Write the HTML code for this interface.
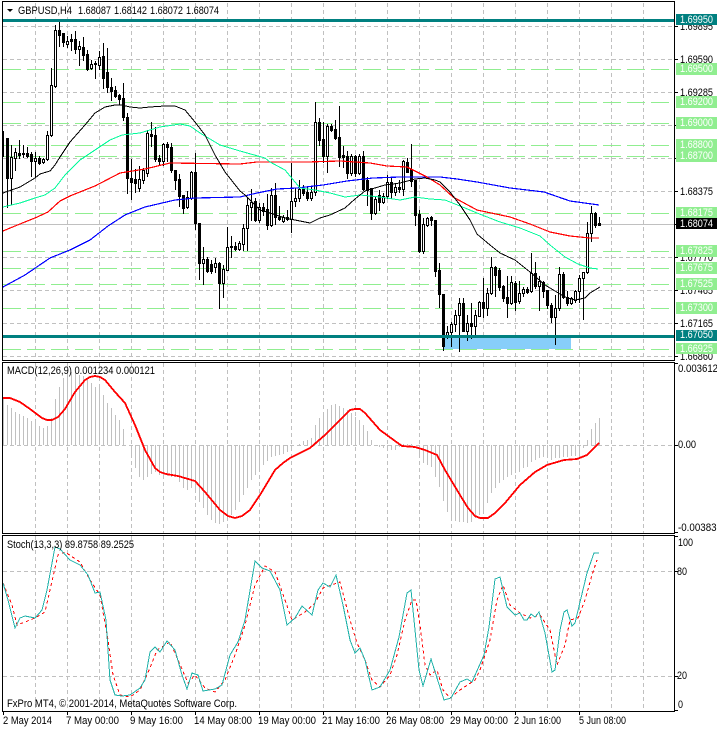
<!DOCTYPE html>
<html><head><meta charset="utf-8"><title>GBPUSD,H4</title>
<style>
html,body{margin:0;padding:0;background:#fff;width:717px;height:729px;overflow:hidden}
svg{display:block}
text{font-family:"Liberation Sans",sans-serif;font-size:10.7px;fill:#000}
.l{fill:none;shape-rendering:crispEdges}
.w{fill:#fff}
</style></head><body>
<svg width="717" height="729" viewBox="0 0 717 729" xmlns="http://www.w3.org/2000/svg">
<rect width="717" height="729" fill="#fff"/>
<!-- grid -->
<g class="l" stroke="#c0c0c0" stroke-width="1" stroke-dasharray="4 3">
<path d="M35.5 3V360M67.5 3V360M99.5 3V360M131.5 3V360M163.5 3V360M195.5 3V360M227.5 3V360M259.5 3V360M291.5 3V360M323.5 3V360M355.5 3V360M387.5 3V360M419.5 3V360M451.5 3V360M483.5 3V360M515.5 3V360M547.5 3V360M579.5 3V360M611.5 3V360M643.5 3V360"/>
<path d="M35.5 363V533M67.5 363V533M99.5 363V533M131.5 363V533M163.5 363V533M195.5 363V533M227.5 363V533M259.5 363V533M291.5 363V533M323.5 363V533M355.5 363V533M387.5 363V533M419.5 363V533M451.5 363V533M483.5 363V533M515.5 363V533M547.5 363V533M579.5 363V533M611.5 363V533M643.5 363V533"/>
<path d="M35.5 536V711M67.5 536V711M99.5 536V711M131.5 536V711M163.5 536V711M195.5 536V711M227.5 536V711M259.5 536V711M291.5 536V711M323.5 536V711M355.5 536V711M387.5 536V711M419.5 536V711M451.5 536V711M483.5 536V711M515.5 536V711M547.5 536V711M579.5 536V711M611.5 536V711M643.5 536V711"/>
<path d="M3 26.5H674M3 59.5H674M3 92.5H674M3 125.5H674M3 158.5H674M3 191.5H674M3 257.5H674M3 290.5H674M3 323.5H674M3 356.5H674M3 445.5H674M3 571.5H674M3 676.5H674"/>
</g>
<path class="l" stroke="#c0c0c0" d="M3 224.5H674"/>
<!-- levels -->
<path class="l" stroke="#90ee90" stroke-dasharray="18 6" d="M3 69.5H670M3 102.5H670M3 123.5H670M3 145.5H670M3 156.5H670M3 213.5H670M3 251.5H670M3 268.5H670M3 284.5H670M3 308.5H670M3 349.5H670"/>
<rect x="443" y="336" width="128" height="13" fill="#87cefa"/>
<!-- candles wicks -->
<path class="l" stroke="#000" d="M3.5 131V157M7.5 138V208M11.5 145V205M15.5 148V171M19.5 140V159M23.5 145V158M27.5 147V158M31.5 152V177M35.5 152V177M39.5 156V165M43.5 158V164M47.5 131V161M51.5 68V137M55.5 25V88M59.5 20V47M63.5 33V47M67.5 36V48M71.5 34V51M75.5 31V54M79.5 41V66M83.5 37V61M87.5 50V71M91.5 60V70M95.5 61V79M99.5 51V70M103.5 43V89M107.5 48V93M111.5 78V101M115.5 86V98M119.5 94V105M123.5 83V121M127.5 113V194M131.5 159V200M135.5 169V193M139.5 166V192M143.5 168V184M147.5 130V177M151.5 122V147M155.5 127V162M159.5 155V166M163.5 143V166M167.5 142V162M171.5 143V173M175.5 170V190M179.5 174V207M183.5 195V214M187.5 191V209M191.5 171V200M195.5 153V230M199.5 223V280M203.5 247V285M207.5 257V273M211.5 260V274M215.5 258V273M219.5 262V309M223.5 265V298M227.5 227V271M231.5 236V258M235.5 242V251M239.5 241V251M243.5 224V251M247.5 197V251M251.5 189V221M255.5 198V222M259.5 203V223M263.5 203V216M267.5 194V230M271.5 188V227M275.5 183V225M279.5 206V221M283.5 215V223M287.5 210V221M291.5 163V233M295.5 188V207M299.5 180V202M303.5 185V196M307.5 187V201M311.5 187V201M315.5 102V196M319.5 118V146M323.5 122V163M327.5 124V173M331.5 124V132M335.5 120V140M339.5 106V167M343.5 146V168M347.5 151V179M351.5 154V176M355.5 155V177M359.5 154V175M363.5 151V191M367.5 177V206M371.5 188V220M375.5 196V215M379.5 190V211M383.5 193V204M387.5 175V199M391.5 178V199M395.5 183V196M399.5 180V193M403.5 160V196M407.5 158V173M411.5 144V187M415.5 180V226M419.5 210V253M423.5 218V254M427.5 217V227M431.5 216V226M435.5 220V277M439.5 263V308M443.5 294V351M447.5 326V339M451.5 322V347M455.5 310V332M459.5 298V352M463.5 298V332M467.5 315V341M471.5 303V339M475.5 310V336M479.5 301V317M483.5 278V318M487.5 288V316M491.5 257V295M495.5 266V297M499.5 268V291M503.5 285V302M507.5 276V318M511.5 276V305M515.5 281V311M519.5 281V304M523.5 287V297M527.5 287V294M531.5 253V293M535.5 262V289M539.5 276V311M543.5 281V298M547.5 290V309M551.5 303V323M555.5 295V345M559.5 267V311M563.5 272V299M567.5 291V306M571.5 297V305M575.5 290V303M579.5 275V303M583.5 272V320M587.5 222V274M591.5 206V242M595.5 212V228M599.5 217V226"/>
<!-- candle bodies -->
<path class="l" stroke="#000" stroke-width="3" d="M7.5 138V179M11.5 157V179M15.5 152V159M19.5 153V156M23.5 153V155M27.5 153V157M31.5 154V162M35.5 158V162M39.5 158V164M43.5 159V163M47.5 135V160M51.5 85V136M55.5 30V87M59.5 30V36M63.5 33V43M67.5 41V45M71.5 39V42M75.5 39V50M79.5 46V50M83.5 47V56M87.5 54V70M91.5 64V69M95.5 63V65M99.5 57V66M103.5 56V79M107.5 72V88M111.5 87V92M115.5 90V97M119.5 95V100M123.5 98V118M127.5 117V179M131.5 178V183M135.5 179V184M139.5 179V189M143.5 170V181M147.5 133V174M151.5 134V137M155.5 135V160M159.5 158V162M163.5 144V162M167.5 144V148M171.5 147V171M175.5 170V181M179.5 179V197M183.5 195V209M187.5 197V208M191.5 172V199M195.5 172V224M199.5 223V264M203.5 259V264M207.5 259V272M211.5 264V272M215.5 263V268M219.5 263V284M223.5 269V284M227.5 247V271M231.5 246V248M235.5 246V250M239.5 243V250M243.5 228V245M247.5 205V229M251.5 202V208M255.5 201V221M259.5 207V221M263.5 207V212M267.5 209V226M271.5 195V226M275.5 195V218M279.5 217V220M283.5 217V222M287.5 217V220M291.5 201V220M295.5 198V202M299.5 189V199M303.5 189V194M307.5 192V199M311.5 192V199M315.5 122V193M319.5 122V141M323.5 139V157M327.5 126V157M331.5 126V131M335.5 129V139M339.5 137V158M343.5 155V158M347.5 156V174M351.5 156V174M355.5 156V174M359.5 156V174M363.5 156V190M367.5 180V191M371.5 188V214M375.5 199V214M379.5 195V203M383.5 196V203M387.5 182V197M391.5 182V193M395.5 187V193M399.5 187V190M403.5 161V190M407.5 162V173M411.5 169V182M415.5 180V216M419.5 214V252M423.5 224V252M427.5 218V226M431.5 217V221M435.5 220V272M439.5 270V295M443.5 294V347M447.5 332V336M451.5 324V333M455.5 315V325M459.5 303V316M463.5 303V332M467.5 323V332M471.5 323V327M475.5 315V327M479.5 302V317M483.5 302V309M487.5 293V309M491.5 267V294M495.5 267V276M499.5 270V288M503.5 286V299M507.5 297V304M511.5 282V304M515.5 283V303M519.5 293V302M523.5 289V294M527.5 289V293M531.5 273V292M535.5 273V287M539.5 281V287M543.5 282V292M547.5 290V306M551.5 305V318M555.5 308V318M559.5 274V309M563.5 274V298M567.5 297V304M571.5 298V304M575.5 291V301M579.5 278V292M583.5 272V279M587.5 233V273M591.5 213V234M595.5 213V226M599.5 223V226"/>
<!-- white insides -->
<path class="l" stroke="#fff" d="M11.5 158V178M15.5 153V158M35.5 159V161M43.5 160V162M47.5 136V159M51.5 86V135M55.5 31V86M67.5 42V44M79.5 47V49M91.5 65V68M99.5 58V65M139.5 180V188M143.5 171V180M147.5 134V173M163.5 145V161M187.5 198V207M191.5 173V198M203.5 260V263M215.5 264V267M223.5 270V283M227.5 248V270M239.5 244V249M243.5 229V244M247.5 206V228M251.5 203V207M259.5 208V220M271.5 196V225M283.5 218V221M287.5 218V219M291.5 202V219M295.5 199V201M299.5 190V198M311.5 193V198M315.5 123V192M327.5 127V156M351.5 157V173M359.5 157V173M375.5 200V213M383.5 197V202M387.5 183V196M395.5 188V192M403.5 162V189M423.5 225V251M427.5 219V225M447.5 333V335M451.5 325V332M455.5 316V324M459.5 304V315M467.5 324V331M475.5 316V326M479.5 303V316M487.5 294V308M491.5 268V293M511.5 283V303M519.5 294V301M523.5 290V293M531.5 274V291M539.5 282V286M555.5 309V317M559.5 275V308M571.5 299V303M575.5 292V300M579.5 279V291M583.5 273V278M587.5 234V272M591.5 214V233"/>
<!-- teal lines -->
<rect x="3" y="19" width="671" height="3" fill="#008080"/>
<rect x="3" y="335" width="671" height="3" fill="#008080"/>
<!-- MAs -->
<polyline class="l" stroke="#0000ff" stroke-width="1.2" points="3,287 25,275 50,258 70,250 90,240 108,226 125,215 145,207 175,200 195,198 240,197 257,193 277,189 297,188 323,185 347,181 373,178 400,177 440,177 457,179 477,182 510,188 544,192 570,201 599,205"/>
<polyline class="l" stroke="#ff0000" stroke-width="1.2" points="3,231 15,226 35,218 48,212 60,201 70,196 95,186 120,173 145,169 170,163 240,164 257,162 307,162 340,161 370,163 387,166 407,167 427,177 440,185 453,197 477,210 510,217 530,224 550,232 570,236 590,238 599,238"/>
<polyline class="l" stroke="#00fa9a" stroke-width="1" points="3,207 20,203 35,198 45,195 55,188 65,175 80,160 95,150 110,140 122,135 140,133 160,127 180,124 190,126 200,133 220,145 240,151 265,158 270,162 285,170 300,188 315,190 330,193 345,197 360,195 380,197 400,200 415,197 430,199 445,200 450,202 465,208 477,213 500,222 520,228 540,236 550,245 565,257 578,264 590,268 598,269"/>
<polyline class="l" stroke="#000" points="3,193 20,187 35,178 40,174 50,171 55,165 60,157 70,142 85,125 95,113 105,107 115,105 122,105 130,107 140,108 150,107 165,106 175,106 185,110 195,122 205,135 215,155 225,172 240,191 245,195 260,210 270,213 285,218 300,221 310,223 320,218 330,215 345,208 355,199 365,191 375,188 385,185 400,183 415,179 425,178 435,180 440,182 450,192 460,205 470,220 477,234 490,245 500,253 515,260 530,272 545,285 555,291 565,297 575,300 585,298 590,293 600,287"/>
<!-- MACD hist -->
<path class="l" stroke="#c0c0c0" d="M3.5 397V445M7.5 405V445M11.5 408V445M15.5 412V445M19.5 414V445M23.5 416V445M27.5 418V445M31.5 421V445M35.5 423V445M39.5 426V445M43.5 428V445M47.5 426V445M51.5 418V445M55.5 399V445M59.5 387V445M63.5 378V445M67.5 373V445M71.5 372V445M75.5 373V445M79.5 375V445M83.5 376V445M87.5 378V445M91.5 383V445M95.5 387V445M99.5 387V445M103.5 395V445M107.5 403V445M111.5 408V445M115.5 415V445M119.5 420V445M123.5 429V445M131.5 445V458M135.5 445V468M139.5 445V477M143.5 445V480M147.5 445V477M151.5 445V474M155.5 445V472M159.5 445V475M163.5 445V476M167.5 445V476M171.5 445V477M175.5 445V477M179.5 445V482M183.5 445V488M187.5 445V490M191.5 445V488M195.5 445V490M199.5 445V502M203.5 445V508M207.5 445V515M211.5 445V520M215.5 445V523M219.5 445V524M223.5 445V522M227.5 445V518M231.5 445V515M235.5 445V510M239.5 445V502M243.5 445V495M247.5 445V488M251.5 445V480M255.5 445V475M259.5 445V470M263.5 445V465M267.5 445V461M271.5 445V457M275.5 445V456M279.5 445V455M283.5 445V454M287.5 445V452M291.5 445V448M299.5 444V445M303.5 441V445M307.5 440V445M311.5 438V445M315.5 425V445M319.5 418V445M323.5 415V445M327.5 409V445M331.5 405V445M335.5 404V445M339.5 406V445M343.5 408V445M347.5 410V445M351.5 413V445M355.5 417V445M359.5 420V445M363.5 425V445M367.5 431V445M371.5 440V445M379.5 445V447M383.5 445V448M387.5 445V449M391.5 445V450M395.5 445V450M399.5 445V447M403.5 444V445M407.5 444V445M411.5 444V445M419.5 445V455M423.5 445V463M427.5 445V465M431.5 445V467M435.5 445V477M439.5 445V487M443.5 445V501M447.5 445V512M451.5 445V521M455.5 445V521M459.5 445V522M463.5 445V522M467.5 445V523M471.5 445V522M475.5 445V518M479.5 445V515M483.5 445V513M487.5 445V503M491.5 445V493M495.5 445V488M499.5 445V483M503.5 445V480M507.5 445V477M511.5 445V475M515.5 445V473M519.5 445V472M523.5 445V468M527.5 445V467M531.5 445V462M535.5 445V460M539.5 445V458M543.5 445V457M547.5 445V458M551.5 445V460M555.5 445V458M559.5 445V458M563.5 445V457M567.5 445V457M571.5 445V456M575.5 445V456M579.5 445V455M583.5 445V448M587.5 440V445M591.5 429V445M595.5 423V445M599.5 418V445"/>
<polyline class="l" stroke="#ff0000" stroke-width="1.8" stroke-linejoin="round" points="3,398 10,398 20,402 30,409 42,418 47,420 52,420 58,417 65,409 75,392 85,380 90,377 95,376 100,377 105,380 115,392 125,403 135,425 145,450 155,468 160,472 166,474 178,476 195,481 205,492 220,510 228,516 235,518 242,516 250,510 260,495 275,470 283,463 290,458 310,448 325,435 340,420 350,410 355,409 360,409 365,413 380,430 395,441 402,446 415,447 425,450 437,455 445,470 460,495 468,508 475,516 480,518 488,518 495,513 505,503 520,485 535,472 547,465 564,460 577,459 587,455 599,443"/>
<!-- Stoch -->
<polyline class="l" stroke="#ff0000" stroke-dasharray="3 3" points="3,583 12,605 17,625 25,622 35,618 45,612 50,590 58,555 65,552 80,562 90,580 100,595 108,640 113,675 120,695 130,697 140,690 150,668 157,650 170,642 178,660 188,683 195,675 205,688 215,692 225,680 235,655 245,625 255,585 265,566 275,572 285,600 292,620 305,612 315,603 323,588 340,582 350,620 357,643 365,660 372,680 380,687 390,675 397,655 405,620 412,600 416,600 420,625 425,665 430,675 437,670 443,690 450,698 460,690 475,680 480,670 490,640 497,600 503,585 510,605 520,613 530,618 540,615 550,630 557,665 565,645 570,620 578,618 585,600 592,575 597,560"/>
<polyline class="l" stroke="#20b2aa" points="3,583 8,600 15,628 20,618 25,616 35,618 42,610 47,590 55,547 60,549 70,560 80,565 88,575 95,593 100,592 106,620 110,680 115,695 122,696 130,695 140,688 145,680 150,652 155,647 160,652 167,641 175,650 182,675 187,689 192,673 198,675 203,691 215,689 222,685 230,655 238,642 245,620 255,561 262,568 270,571 280,590 287,625 295,618 302,606 312,615 318,590 323,583 330,587 336,575 343,605 350,640 355,653 360,648 365,660 372,690 380,687 390,670 399,637 407,593 411,590 415,630 419,670 423,686 431,659 437,678 444,700 451,698 460,682 467,679 472,682 484,655 489,627 495,579 500,577 507,607 515,615 520,613 524,620 527,620 531,614 535,617 539,612 545,633 552,672 555,670 560,630 564,612 567,610 572,626 575,623 587,573 594,553 599,553"/>
<!-- frames -->
<g class="l" stroke="#000">
<path d="M2.5 1.5H674.5V360.5H2.5Z"/>
<path d="M2.5 362.5H674.5V533.5H2.5Z"/>
<path d="M2.5 535.5H674.5V711.5H2.5Z"/>
<path d="M674 26.5H678M674 59.5H678M674 92.5H678M674 125.5H678M674 158.5H678M674 191.5H678M674 224.5H678M674 257.5H678M674 290.5H678M674 323.5H678M674 356.5H678M674 445.5H678M674 363.5H678M674 532.5H678M674 536.5H678M674 571.5H678M674 676.5H678M674 710.5H678"/>
<path d="M3.5 711V715M67.5 711V715M131.5 711V715M195.5 711V715M259.5 711V715M323.5 711V715M387.5 711V715M451.5 711V715M515.5 711V715M579.5 711V715"/>
</g>
<!-- title -->
<polygon points="7,9 13,9 10,12" fill="#000"/>
<text x="18" y="14" textLength="54" lengthAdjust="spacingAndGlyphs">GBPUSD,H4</text>
<text x="78" y="14" textLength="33" lengthAdjust="spacingAndGlyphs">1.68087</text>
<text x="114" y="14" textLength="33" lengthAdjust="spacingAndGlyphs">1.68142</text>
<text x="150" y="14" textLength="33" lengthAdjust="spacingAndGlyphs">1.68072</text>
<text x="186" y="14" textLength="33" lengthAdjust="spacingAndGlyphs">1.68074</text>
<text x="7" y="374" textLength="148" lengthAdjust="spacingAndGlyphs">MACD(12,26,9) 0.001234 0.000121</text>
<text x="7" y="548" textLength="127" lengthAdjust="spacingAndGlyphs">Stoch(13,3,3) 89.8758 89.2525</text>
<text x="7" y="707" textLength="230" lengthAdjust="spacingAndGlyphs">FxPro MT4, © 2001-2014, MetaQuotes Software Corp.</text>
<!-- axis -->
<g>
<text x="680" y="30" textLength="33" lengthAdjust="spacingAndGlyphs">1.69895</text>
<text x="680" y="63" textLength="33" lengthAdjust="spacingAndGlyphs">1.69590</text>
<text x="680" y="96" textLength="33" lengthAdjust="spacingAndGlyphs">1.69285</text>
<text x="680" y="195" textLength="33" lengthAdjust="spacingAndGlyphs">1.68375</text>
<text x="680" y="261" textLength="33" lengthAdjust="spacingAndGlyphs">1.67770</text>
<text x="680" y="294" textLength="33" lengthAdjust="spacingAndGlyphs">1.67465</text>
<text x="680" y="327" textLength="33" lengthAdjust="spacingAndGlyphs">1.67165</text>
<text x="680" y="360" textLength="33" lengthAdjust="spacingAndGlyphs">1.66860</text>
</g>
<g fill="#90ee90">
<rect x="676" y="63" width="41" height="12"/>
<rect x="676" y="96" width="41" height="12"/>
<rect x="676" y="117" width="41" height="12"/>
<rect x="676" y="139" width="41" height="23"/>
<rect x="676" y="207" width="41" height="12"/>
<rect x="676" y="245" width="41" height="12"/>
<rect x="676" y="262" width="41" height="12"/>
<rect x="676" y="278" width="41" height="12"/>
<rect x="676" y="302" width="41" height="12"/>
<rect x="676" y="343" width="41" height="11"/>
</g>
<rect x="676" y="14" width="41" height="11" fill="#008080"/>
<rect x="676" y="330" width="41" height="11" fill="#008080"/>
<rect x="676" y="218" width="41" height="11" fill="#000"/>
<g class="w">
<text class="w" x="680" y="23" textLength="33" lengthAdjust="spacingAndGlyphs">1.69950</text>
<text class="w" x="680" y="72" textLength="33" lengthAdjust="spacingAndGlyphs">1.69500</text>
<text class="w" x="680" y="105" textLength="33" lengthAdjust="spacingAndGlyphs">1.69200</text>
<text class="w" x="680" y="126" textLength="33" lengthAdjust="spacingAndGlyphs">1.69000</text>
<text class="w" x="680" y="148" textLength="33" lengthAdjust="spacingAndGlyphs">1.68800</text>
<text class="w" x="680" y="159" textLength="33" lengthAdjust="spacingAndGlyphs">1.68700</text>
<text class="w" x="680" y="216" textLength="33" lengthAdjust="spacingAndGlyphs">1.68175</text>
<text class="w" x="680" y="227" textLength="33" lengthAdjust="spacingAndGlyphs">1.68074</text>
<text class="w" x="680" y="254" textLength="33" lengthAdjust="spacingAndGlyphs">1.67825</text>
<text class="w" x="680" y="271" textLength="33" lengthAdjust="spacingAndGlyphs">1.67675</text>
<text class="w" x="680" y="287" textLength="33" lengthAdjust="spacingAndGlyphs">1.67525</text>
<text class="w" x="680" y="311" textLength="33" lengthAdjust="spacingAndGlyphs">1.67300</text>
<text class="w" x="680" y="338" textLength="33" lengthAdjust="spacingAndGlyphs">1.67050</text>
<text class="w" x="680" y="352" textLength="33" lengthAdjust="spacingAndGlyphs">1.66925</text>
</g>
<text x="678" y="372" textLength="40" lengthAdjust="spacingAndGlyphs">0.003612</text>
<text x="678" y="448" textLength="18" lengthAdjust="spacingAndGlyphs">0.00</text>
<text x="678" y="531" textLength="44" lengthAdjust="spacingAndGlyphs">-0.003835</text>
<text x="678" y="546" textLength="15" lengthAdjust="spacingAndGlyphs">100</text>
<text x="677" y="575" textLength="10" lengthAdjust="spacingAndGlyphs">80</text>
<text x="677" y="679" textLength="10" lengthAdjust="spacingAndGlyphs">20</text>
<text x="678" y="708" textLength="5" lengthAdjust="spacingAndGlyphs">0</text>
<text x="3" y="724" textLength="49" lengthAdjust="spacingAndGlyphs">2 May 2014</text>
<text x="66" y="724" textLength="53" lengthAdjust="spacingAndGlyphs">7 May 00:00</text>
<text x="130" y="724" textLength="53" lengthAdjust="spacingAndGlyphs">9 May 16:00</text>
<text x="194" y="724" textLength="58" lengthAdjust="spacingAndGlyphs">14 May 08:00</text>
<text x="258" y="724" textLength="58" lengthAdjust="spacingAndGlyphs">19 May 00:00</text>
<text x="322" y="724" textLength="58" lengthAdjust="spacingAndGlyphs">21 May 16:00</text>
<text x="386" y="724" textLength="58" lengthAdjust="spacingAndGlyphs">26 May 08:00</text>
<text x="450" y="724" textLength="58" lengthAdjust="spacingAndGlyphs">29 May 00:00</text>
<text x="514" y="724" textLength="47" lengthAdjust="spacingAndGlyphs">2 Jun 16:00</text>
<text x="579" y="724" textLength="47" lengthAdjust="spacingAndGlyphs">5 Jun 08:00</text>
</svg>
</body></html>
